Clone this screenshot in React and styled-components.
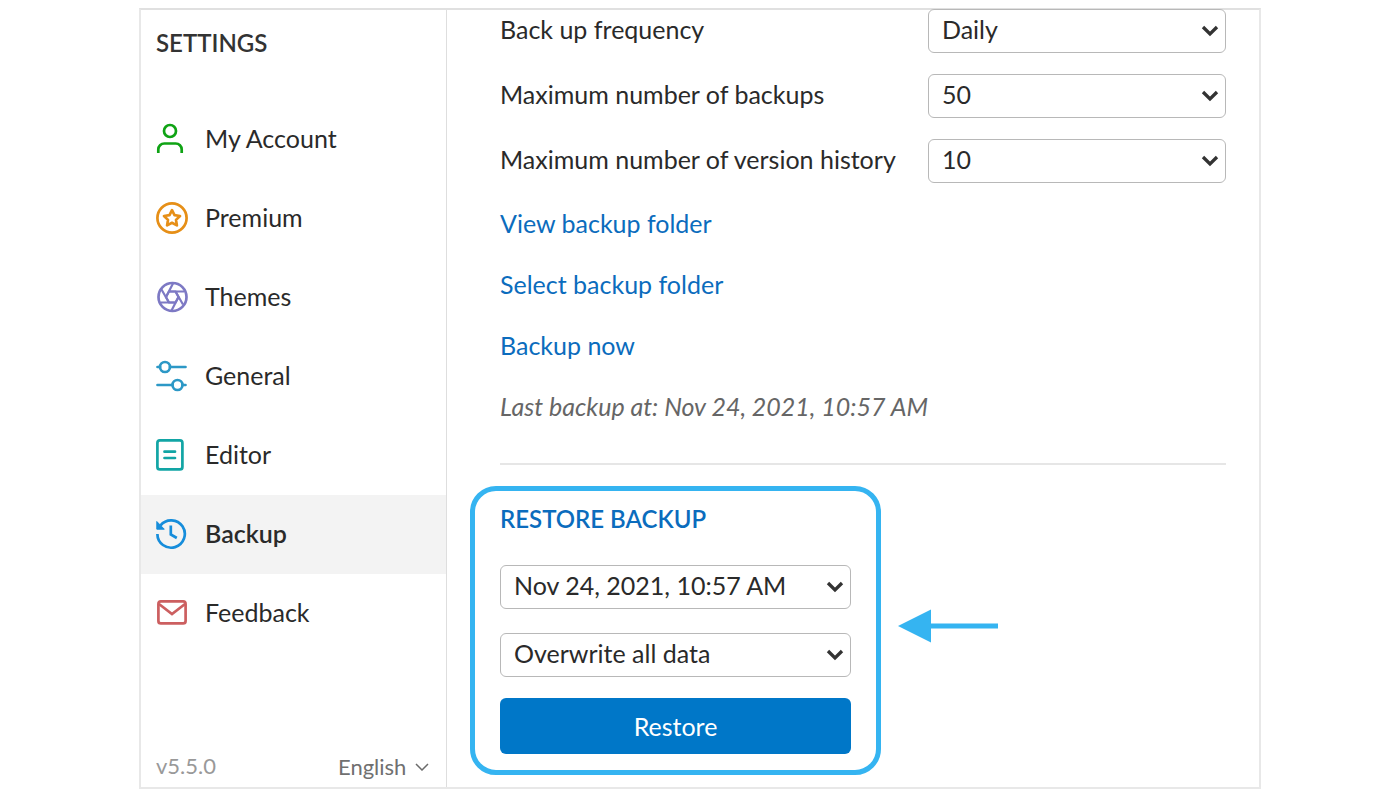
import React, { useState } from 'react'
import styled, { createGlobalStyle } from 'styled-components'

const navItems = [
  { id: 'account', label: 'My Account', icon: AccountIcon },
  { id: 'premium', label: 'Premium', icon: PremiumIcon },
  { id: 'themes', label: 'Themes', icon: ThemesIcon },
  { id: 'general', label: 'General', icon: GeneralIcon },
  { id: 'editor', label: 'Editor', icon: EditorIcon },
  { id: 'backup', label: 'Backup', icon: BackupIcon },
  { id: 'feedback', label: 'Feedback', icon: FeedbackIcon },
]

const App = () => {
  const [active, setActive] = useState('backup')

  return (
    <>
      <GlobalStyle />
      <StWindow>
        <StSidebar>
          <StSidebarTitle>SETTINGS</StSidebarTitle>
          <StNav>
            {navItems.map(({ id, label, icon: Icon }) => (
              <StNavButton key={id} $active={id === active} onClick={() => setActive(id)}>
                <Icon />
                <StNavLabel>{label}</StNavLabel>
              </StNavButton>
            ))}
          </StNav>
          <StSidebarFooter>
            <StVersion>v5.5.0</StVersion>
            <StLanguage>
              <select aria-label="Language" defaultValue="English">
                <option>English</option>
              </select>
              <svg width="14" height="8" viewBox="0 0 14 8">
                <path d="M1 1l6 6 6-6" fill="none" stroke="#6b6b6b" strokeWidth="1.5" />
              </svg>
            </StLanguage>
          </StSidebarFooter>
        </StSidebar>

        <StContent>
          <StOptions>
            <OptionRow id="frequency" label="Back up frequency" options={['Daily', 'Weekly']} />
            <OptionRow id="max-backups" label="Maximum number of backups" options={['50', '100']} />
            <OptionRow id="max-history" label="Maximum number of version history" options={['10', '20']} />
          </StOptions>
          <StActions>
            <StLink href="#view">View backup folder</StLink>
            <StLink href="#select">Select backup folder</StLink>
            <StLink href="#now">Backup now</StLink>
            <StLastBackup>Last backup at: Nov 24, 2021, 10:57 AM</StLastBackup>
          </StActions>
          <StDivider />
          <StRestoreRow>
            <StRestoreBox>
              <h2>RESTORE BACKUP</h2>
              <StRestoreFields>
                <Select label="Backup to restore" options={['Nov 24, 2021, 10:57 AM']} />
                <Select label="Restore mode" options={['Overwrite all data', 'Keep existing data']} />
              </StRestoreFields>
              <StRestoreButton>Restore</StRestoreButton>
            </StRestoreBox>
            <StArrow width="100" height="34" viewBox="0 0 100 34">
              <path d="M0 17L33 0.500V14.500H100V19.500H33V33.500z" fill="#35b4f1" />
            </StArrow>
          </StRestoreRow>
        </StContent>
      </StWindow>
    </>
  )
}

export default App

const OptionRow = ({ id, label, options }) => (
  <StOptionRow>
    <label htmlFor={id}>{label}</label>
    <Select id={id} options={options} />
  </StOptionRow>
)

const Select = ({ id, label, options }) => (
  <StSelect>
    <select id={id} aria-label={label}>
      {options.map((option) => (
        <option key={option}>{option}</option>
      ))}
    </select>
    <svg width="18" height="12" viewBox="0 0 18 12">
      <path d="M2 2l7 7 7-7" fill="none" stroke="#333" strokeWidth="3.300" />
    </svg>
  </StSelect>
)

function AccountIcon() {
  return (
    <StIcon viewBox="0 0 32 32" $color="#0fa314">
      <circle cx="14" cy="8" r="6" />
      <path d="M2.300 30v-3.500a6 6 0 0 1 6-6h11.400a6 6 0 0 1 6 6V30" />
    </StIcon>
  )
}

function PremiumIcon() {
  return (
    <StIcon viewBox="0 0 32 32" $color="#e68f17">
      <circle cx="16" cy="16" r="14.600" />
      <path d="M16 8.200l2.500 5 5.500.8-4 3.900.9 5.500-4.900-2.600-4.900 2.600.9-5.500-4-3.900 5.500-.8z" strokeLinejoin="round" />
    </StIcon>
  )
}

function ThemesIcon() {
  return (
    <StIcon viewBox="0 0 32 32" $color="#7d79c4">
      <circle cx="16.500" cy="16" r="14" />
      <path d="M13 10.500h15.200M19.500 10.500l7.500 13M22.500 16l-7 13.500M19.500 21.500H4.500M13 21.500L5.500 8.500M10 16l7-13.500" strokeWidth="2.200" />
      <path d="M13 10.500h6.500l3 5.500-3 5.500H13L10 16z" strokeWidth="2.200" />
    </StIcon>
  )
}

function GeneralIcon() {
  return (
    <StIcon viewBox="0 0 32 32" $color="#2c98c6">
      <circle cx="9" cy="7" r="5" />
      <circle cx="21.500" cy="25" r="5" />
      <path d="M1.500 7H4M14 7h15.500M1.500 25h15M26.500 25h3" strokeLinecap="round" />
    </StIcon>
  )
}

function EditorIcon() {
  return (
    <StIcon viewBox="0 0 32 32" $color="#12a5a5">
      <rect x="1.400" y="1.400" width="25" height="29" rx="2.500" />
      <path d="M8.500 12.700h10.500M8.500 19h10.500" strokeLinecap="round" />
    </StIcon>
  )
}

function BackupIcon() {
  return (
    <StIcon viewBox="0 0 32 32" $color="#168ddb">
      <path d="M1.400 16A13.700 13.700 0 1 0 4.500 7.300" />
      <path d="M14.800 7.500v9l6 3.500" />
      <path d="M.8 3.500v7.700h7.500z" fill="#168ddb" strokeWidth="1" />
    </StIcon>
  )
}

function FeedbackIcon() {
  return (
    <StIcon viewBox="0 0 32 32" $color="#cc5f60">
      <rect x="2.400" y="4.400" width="27.200" height="22" rx="2.500" />
      <path d="M3 7l13 10L29 7" />
    </StIcon>
  )
}

const GlobalStyle = createGlobalStyle`
  * {
    box-sizing: border-box;
  }
  body {
    margin: 0;
    background: #fff;
    color: #2a2a2a;
    font: 25px/32px Lato, sans-serif;
  }
  button,
  select {
    font: inherit;
    color: inherit;
  }
`

const StWindow = styled.div`
  display: flex;
  min-height: calc(100vh - 12px);
  margin: 8px calc(10% - 1px) 4px;
  border: 2px solid #e8e8e8;
  border-top-color: #e0e0e0;
`

const StSidebar = styled.aside`
  display: flex;
  flex-direction: column;
  flex: 0 0 306px;
  border-right: 1px solid #dedede;
`

const StSidebarTitle = styled.h1`
  margin: 0;
  padding: 17px 15px 41px;
  font-size: 24px;
  font-weight: 600;
  color: #333;
`

const StNav = styled.nav`
  display: flex;
  flex-direction: column;
`

const StNavButton = styled.button`
  display: flex;
  align-items: center;
  gap: 17px;
  height: 79px;
  padding: 0 15px 2px;
  border: none;
  background: ${({ $active }) => ($active ? '#f3f3f3' : 'transparent')};
  font-weight: ${({ $active }) => ($active ? 600 : 400)};
  text-align: left;
  cursor: pointer;
`

const StNavLabel = styled.span`
  padding-bottom: 2px;
`

const StIcon = styled.svg`
  width: 32px;
  height: 32px;
  fill: none;
  stroke: ${({ $color }) => $color};
  stroke-width: 2.7;
`

const StSidebarFooter = styled.footer`
  display: flex;
  justify-content: space-between;
  align-items: center;
  margin-top: auto;
  padding: 0 17px 3px 15px;
  font-size: 22px;
`

const StVersion = styled.span`
  padding-bottom: 2px;
  color: #999;
`

const StLanguage = styled.div`
  display: flex;
  align-items: center;
  gap: 8px;
  color: #707070;
  select {
    appearance: none;
    border: none;
    background: none;
  }
`

const StContent = styled.main`
  flex: 1;
  min-width: 0;
  margin-top: -1px;
  padding: 0 33px 12px 53px;
`

const StOptions = styled.div`
  display: grid;
  gap: 21px;
`

const StOptionRow = styled.div`
  display: grid;
  grid-template-columns: 1fr 298px;
  align-items: center;
  label {
    padding-bottom: 4px;
  }
`

const StSelect = styled.div`
  position: relative;
  select {
    display: block;
    appearance: none;
    width: 100%;
    height: 44px;
    padding: 0 40px 4px 13px;
    border: 1px solid #b8b8b8;
    border-radius: 6px;
    background: #fff;
  }
  svg {
    position: absolute;
    top: 16px;
    right: 7px;
    pointer-events: none;
  }
`

const StActions = styled.div`
  display: flex;
  flex-direction: column;
  align-items: flex-start;
  gap: 29px;
  margin-top: 24px;
`

const StLink = styled.a`
  color: #0b6cbd;
  text-decoration: none;
`

const StLastBackup = styled.p`
  margin: 0;
  color: #666;
  font-style: italic;
`

const StDivider = styled.hr`
  height: 2px;
  margin: 41px 0 21px;
  border: none;
  background: #e6e6e6;
`

const StRestoreRow = styled.div`
  display: flex;
  align-items: center;
  gap: 17px;
  margin-left: -30px;
`

const StRestoreBox = styled.section`
  flex: 0 1 411px;
  padding: 12px 25px 16px;
  border: 5px solid #35b4f1;
  border-radius: 26px;
  h2 {
    margin: 0 0 30px;
    font-size: 24px;
    font-weight: 600;
    color: #0b6cbd;
  }
`

const StRestoreFields = styled.div`
  display: grid;
  gap: 24px;
`

const StRestoreButton = styled.button`
  width: 100%;
  height: 56px;
  margin-top: 21px;
  border: none;
  border-radius: 6px;
  background: #0077c8;
  color: #fff;
  cursor: pointer;
`

const StArrow = styled.svg`
  flex: none;
  margin-bottom: 10px;
`
